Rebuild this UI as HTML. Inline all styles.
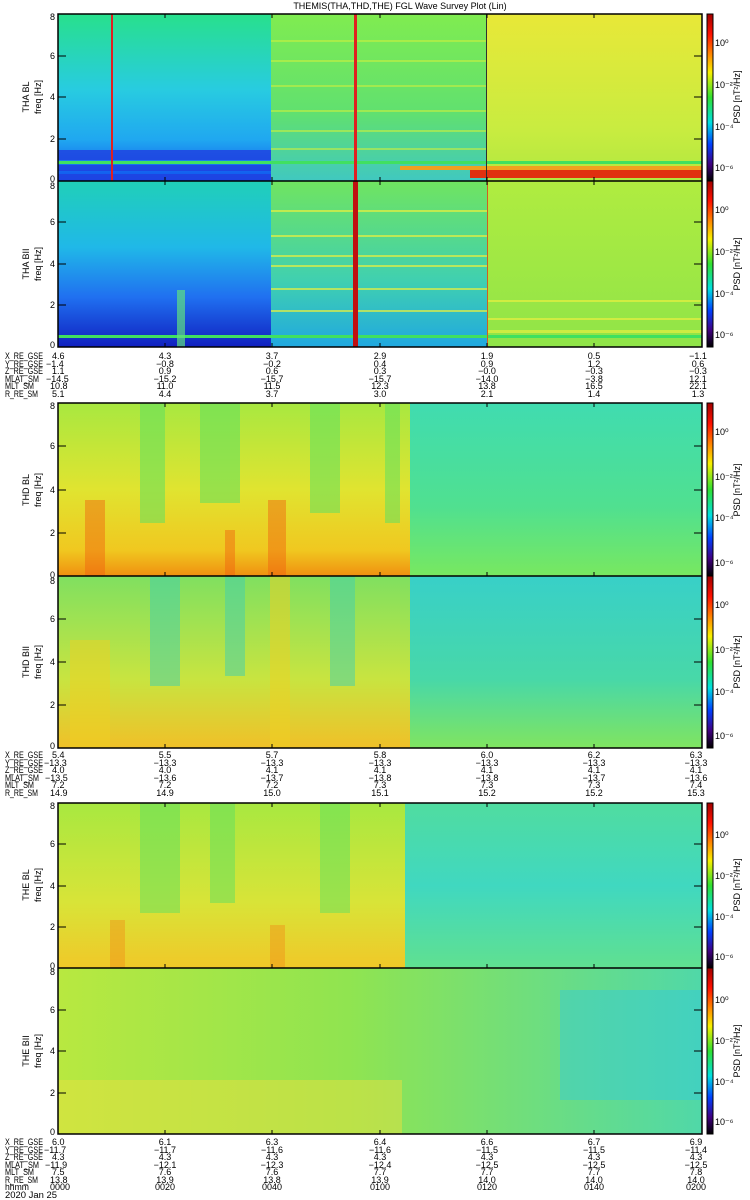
<!DOCTYPE html>
<html><head><meta charset="utf-8"><style>
html,body{margin:0;padding:0;background:#fff;}
svg{display:block}
text{font-family:"Liberation Sans",sans-serif;font-size:9px;fill:#000}
</style></head><body>
<svg width="750" height="1200" viewBox="0 0 750 1200" xmlns="http://www.w3.org/2000/svg">
<defs>
<linearGradient id="cb" x1="0" y1="0" x2="0" y2="1">
<stop offset="0" stop-color="#a00000"/><stop offset="0.12" stop-color="#ff1000"/>
<stop offset="0.25" stop-color="#ff9000"/><stop offset="0.35" stop-color="#f8f000"/>
<stop offset="0.5" stop-color="#30e030"/><stop offset="0.65" stop-color="#00e0e0"/>
<stop offset="0.78" stop-color="#0040ff"/><stop offset="0.9" stop-color="#400080"/>
<stop offset="1" stop-color="#000000"/></linearGradient>
<linearGradient id="a1l" x1="0" y1="0" x2="0" y2="1">
<stop offset="0" stop-color="#28e08c"/><stop offset="0.45" stop-color="#28cce0"/><stop offset="0.75" stop-color="#20a8f0"/><stop offset="1" stop-color="#1050f0"/></linearGradient>
<linearGradient id="a1m" x1="0" y1="0" x2="0" y2="1">
<stop offset="0" stop-color="#80ec50"/><stop offset="0.6" stop-color="#60e070"/><stop offset="1" stop-color="#40c8c0"/></linearGradient>
<linearGradient id="a1r" x1="0" y1="0" x2="0" y2="1">
<stop offset="0" stop-color="#e8e838"/><stop offset="0.7" stop-color="#c8ec40"/><stop offset="1" stop-color="#b0e840"/></linearGradient>
<linearGradient id="a2l" x1="0" y1="0" x2="0" y2="1">
<stop offset="0" stop-color="#20d0b8"/><stop offset="0.4" stop-color="#20b8e8"/><stop offset="0.7" stop-color="#2070f0"/><stop offset="1" stop-color="#1020c0"/></linearGradient>
<linearGradient id="a2m" x1="0" y1="0" x2="0" y2="1">
<stop offset="0" stop-color="#70e460"/><stop offset="0.6" stop-color="#40d0b0"/><stop offset="1" stop-color="#20a8e0"/></linearGradient>
<linearGradient id="a2r" x1="0" y1="0" x2="0" y2="1">
<stop offset="0" stop-color="#b0ec40"/><stop offset="1" stop-color="#90e448"/></linearGradient>
<linearGradient id="dl" x1="0" y1="0" x2="0" y2="1">
<stop offset="0" stop-color="#a8e840"/><stop offset="0.5" stop-color="#e0e430"/><stop offset="0.85" stop-color="#f0c820"/><stop offset="1" stop-color="#f09010"/></linearGradient>
<linearGradient id="dr" x1="0" y1="0" x2="0" y2="1">
<stop offset="0" stop-color="#40dcb0"/><stop offset="0.6" stop-color="#50e090"/><stop offset="1" stop-color="#78e860"/></linearGradient>
<linearGradient id="d2l" x1="0" y1="0" x2="0" y2="1">
<stop offset="0" stop-color="#80e060"/><stop offset="0.6" stop-color="#c8e440"/><stop offset="1" stop-color="#f0c028"/></linearGradient>
<linearGradient id="d2r" x1="0" y1="0" x2="0" y2="1">
<stop offset="0" stop-color="#38d0c8"/><stop offset="0.6" stop-color="#48d8a8"/><stop offset="1" stop-color="#80e460"/></linearGradient>
<linearGradient id="el" x1="0" y1="0" x2="0" y2="1">
<stop offset="0" stop-color="#a8e840"/><stop offset="0.6" stop-color="#d8e438"/><stop offset="1" stop-color="#f0c828"/></linearGradient>
<linearGradient id="er" x1="0" y1="0" x2="0" y2="1">
<stop offset="0" stop-color="#50dca0"/><stop offset="0.5" stop-color="#40d8c0"/><stop offset="1" stop-color="#60e090"/></linearGradient>
<linearGradient id="e2" x1="0" y1="0" x2="1" y2="0">
<stop offset="0" stop-color="#b8e840"/><stop offset="0.45" stop-color="#90e450"/><stop offset="1" stop-color="#50d8a8"/></linearGradient>
</defs>

<text x="400" y="9" text-anchor="middle" font-size="10">THEMIS(THA,THD,THE) FGL Wave Survey Plot (Lin)</text>

<!-- Panel 1 -->
<rect x="58" y="14" width="213" height="167" fill="url(#a1l)"/>
<rect x="271" y="14" width="216" height="167" fill="url(#a1m)"/>
<rect x="487" y="14" width="215" height="167" fill="url(#a1r)"/>
<g fill="#2040e0" opacity="0.8"><rect x="58" y="150" width="213" height="10"/><rect x="58" y="165" width="213" height="6"/><rect x="58" y="174" width="213" height="6"/></g>
<rect x="58" y="161" width="644" height="3" fill="#40e060"/>
<g fill="#c8f040" opacity="0.6"><rect x="271" y="40" width="216" height="2"/><rect x="271" y="60" width="216" height="2"/><rect x="271" y="85" width="216" height="2"/><rect x="271" y="110" width="216" height="2"/><rect x="271" y="130" width="216" height="2"/><rect x="271" y="148" width="216" height="2"/></g>
<rect x="400" y="166" width="302" height="4" fill="#f0a020"/>
<rect x="470" y="170" width="232" height="8" fill="#e03010"/>
<rect x="111" y="14" width="2" height="333" fill="#e02020"/>
<rect x="354" y="14" width="3" height="167" fill="#e02020"/>
<rect x="486" y="14" width="1" height="167" fill="#303030"/>

<!-- Panel 2 -->
<rect x="58" y="181" width="213" height="166" fill="url(#a2l)"/>
<rect x="271" y="181" width="216" height="166" fill="url(#a2m)"/>
<rect x="487" y="181" width="215" height="166" fill="url(#a2r)"/>
<g fill="#e8f040" opacity="0.7"><rect x="271" y="210" width="216" height="2"/><rect x="271" y="235" width="216" height="2"/><rect x="271" y="255" width="216" height="2"/><rect x="271" y="265" width="216" height="2"/><rect x="271" y="288" width="216" height="2"/><rect x="271" y="310" width="216" height="2"/><rect x="487" y="300" width="215" height="2"/><rect x="487" y="318" width="215" height="2"/><rect x="487" y="330" width="215" height="3"/></g>
<rect x="58" y="335" width="644" height="3" fill="#40e060"/>
<rect x="177" y="290" width="8" height="57" fill="#60e080" opacity="0.7"/>
<rect x="353" y="181" width="5" height="166" fill="#c01010"/>
<rect x="487" y="181" width="1" height="166" fill="#d06020"/>

<!-- Panel 3 -->
<rect x="58" y="403" width="352" height="173" fill="url(#dl)"/>
<rect x="410" y="403" width="292" height="173" fill="url(#dr)"/>
<g fill="#60e060" opacity="0.55"><rect x="140" y="403" width="25" height="120"/><rect x="200" y="403" width="40" height="100"/><rect x="310" y="403" width="30" height="110"/><rect x="385" y="403" width="15" height="120"/></g>
<g fill="#f06010" opacity="0.45"><rect x="85" y="500" width="20" height="76"/><rect x="268" y="500" width="18" height="76"/><rect x="225" y="530" width="10" height="46"/></g>

<!-- Panel 4 -->
<rect x="58" y="576" width="352" height="172" fill="url(#d2l)"/>
<rect x="410" y="576" width="292" height="172" fill="url(#d2r)"/>
<g fill="#40d0b0" opacity="0.5"><rect x="150" y="576" width="30" height="110"/><rect x="225" y="576" width="20" height="100"/><rect x="330" y="576" width="25" height="110"/></g>
<g fill="#f0d020" opacity="0.5"><rect x="270" y="576" width="20" height="172"/><rect x="70" y="640" width="40" height="108"/></g>

<!-- Panel 5 -->
<rect x="58" y="803" width="347" height="165" fill="url(#el)"/>
<rect x="405" y="803" width="297" height="165" fill="url(#er)"/>
<g fill="#60e060" opacity="0.5"><rect x="140" y="803" width="40" height="110"/><rect x="210" y="803" width="25" height="100"/><rect x="320" y="803" width="30" height="110"/></g>
<g fill="#f09018" opacity="0.45"><rect x="110" y="920" width="15" height="48"/><rect x="270" y="925" width="15" height="43"/></g>

<!-- Panel 6 -->
<rect x="58" y="968" width="644" height="166" fill="url(#e2)"/>
<rect x="58" y="1080" width="344" height="54" fill="#e8e040" opacity="0.5"/>
<rect x="560" y="990" width="142" height="110" fill="#30c8e0" opacity="0.4"/>

<g fill="none" stroke="#000" stroke-width="1.5">
<rect x="58" y="14" width="644" height="333"/><line x1="58" y1="181" x2="702" y2="181"/>
<rect x="58" y="403" width="644" height="345"/><line x1="58" y1="576" x2="702" y2="576"/>
<rect x="58" y="803" width="644" height="331"/><line x1="58" y1="968" x2="702" y2="968"/>
</g>
<g stroke="#000" stroke-width="1">
<path d="M165 14v4M272 14v4M380 14v4M487 14v4M594 14v4M165 347v-4M272 347v-4M380 347v-4M487 347v-4M594 347v-4M165 181v-4M272 181v-4M380 181v-4M487 181v-4M594 181v-4M165 181v4M272 181v4M380 181v4M487 181v4M594 181v4"/>
<path d="M165 403v4M272 403v4M380 403v4M487 403v4M594 403v4M165 748v-4M272 748v-4M380 748v-4M487 748v-4M594 748v-4M165 576v-4M272 576v-4M380 576v-4M487 576v-4M594 576v-4"/>
<path d="M165 803v4M272 803v4M380 803v4M487 803v4M594 803v4M165 1134v-4M272 1134v-4M380 1134v-4M487 1134v-4M594 1134v-4M165 968v-4M272 968v-4M380 968v-4M487 968v-4M594 968v-4"/>
<path d="M58 56h8M58 97h8M58 139h8M702 56h-8M702 97h-8M702 139h-8M58 222h8M58 264h8M58 305h8M702 222h-8M702 264h-8M702 305h-8"/>
<path d="M58 446h8M58 490h8M58 533h8M702 446h-8M702 490h-8M702 533h-8M58 619h8M58 662h8M58 705h8M702 619h-8M702 662h-8M702 705h-8"/>
<path d="M58 844h8M58 886h8M58 927h8M702 844h-8M702 886h-8M702 927h-8M58 1010h8M58 1051h8M58 1093h8M702 1010h-8M702 1051h-8M702 1093h-8"/>
</g>

<g stroke="#000" stroke-width="1">
<rect x="707" y="14" width="6" height="167" fill="url(#cb)"/><rect x="707" y="181" width="6" height="166" fill="url(#cb)"/>
<rect x="707" y="403" width="6" height="173" fill="url(#cb)"/><rect x="707" y="576" width="6" height="172" fill="url(#cb)"/>
<rect x="707" y="803" width="6" height="165" fill="url(#cb)"/><rect x="707" y="968" width="6" height="166" fill="url(#cb)"/>
</g>

<g font-size="8" text-anchor="end">
<text x="55" y="20">8</text><text x="55" y="59">6</text><text x="55" y="100">4</text><text x="55" y="142">2</text><text x="55" y="182">0</text>
<text x="55" y="189">8</text><text x="55" y="225">6</text><text x="55" y="267">4</text><text x="55" y="308">2</text><text x="55" y="348">0</text>
<text x="55" y="409">8</text><text x="55" y="449">6</text><text x="55" y="493">4</text><text x="55" y="536">2</text><text x="55" y="578">0</text>
<text x="55" y="584">8</text><text x="55" y="622">6</text><text x="55" y="665">4</text><text x="55" y="708">2</text><text x="55" y="749">0</text>
<text x="55" y="809">8</text><text x="55" y="847">6</text><text x="55" y="889">4</text><text x="55" y="930">2</text><text x="55" y="969">0</text>
<text x="55" y="975">8</text><text x="55" y="1013">6</text><text x="55" y="1054">4</text><text x="55" y="1096">2</text><text x="55" y="1135">0</text>
</g>
<g font-size="8">
<text x="715" y="46">10⁰</text><text x="715" y="88">10⁻²</text><text x="715" y="130">10⁻⁴</text><text x="715" y="171">10⁻⁶</text>
<text x="715" y="213">10⁰</text><text x="715" y="255">10⁻²</text><text x="715" y="297">10⁻⁴</text><text x="715" y="338">10⁻⁶</text>
<text x="715" y="435">10⁰</text><text x="715" y="480">10⁻²</text><text x="715" y="521">10⁻⁴</text><text x="715" y="566">10⁻⁶</text>
<text x="715" y="608">10⁰</text><text x="715" y="653">10⁻²</text><text x="715" y="695">10⁻⁴</text><text x="715" y="739">10⁻⁶</text>
<text x="715" y="838">10⁰</text><text x="715" y="879">10⁻²</text><text x="715" y="920">10⁻⁴</text><text x="715" y="960">10⁻⁶</text>
<text x="715" y="1003">10⁰</text><text x="715" y="1044">10⁻²</text><text x="715" y="1085">10⁻⁴</text><text x="715" y="1125">10⁻⁶</text>
</g>
<g font-size="8">
<text transform="translate(740,97) rotate(-90)" text-anchor="middle">PSD [nT²/Hz]</text>
<text transform="translate(740,264) rotate(-90)" text-anchor="middle">PSD [nT²/Hz]</text>
<text transform="translate(740,490) rotate(-90)" text-anchor="middle">PSD [nT²/Hz]</text>
<text transform="translate(740,662) rotate(-90)" text-anchor="middle">PSD [nT²/Hz]</text>
<text transform="translate(740,885) rotate(-90)" text-anchor="middle">PSD [nT²/Hz]</text>
<text transform="translate(740,1051) rotate(-90)" text-anchor="middle">PSD [nT²/Hz]</text>
<text transform="translate(29,97) rotate(-90)" text-anchor="middle">THA BL</text>
<text transform="translate(41,97) rotate(-90)" text-anchor="middle">freq [Hz]</text>
<text transform="translate(29,264) rotate(-90)" text-anchor="middle">THA BII</text>
<text transform="translate(41,264) rotate(-90)" text-anchor="middle">freq [Hz]</text>
<text transform="translate(29,490) rotate(-90)" text-anchor="middle">THD BL</text>
<text transform="translate(41,490) rotate(-90)" text-anchor="middle">freq [Hz]</text>
<text transform="translate(29,662) rotate(-90)" text-anchor="middle">THD BII</text>
<text transform="translate(41,662) rotate(-90)" text-anchor="middle">freq [Hz]</text>
<text transform="translate(29,885) rotate(-90)" text-anchor="middle">THE BL</text>
<text transform="translate(41,885) rotate(-90)" text-anchor="middle">freq [Hz]</text>
<text transform="translate(29,1051) rotate(-90)" text-anchor="middle">THE BII</text>
<text transform="translate(41,1051) rotate(-90)" text-anchor="middle">freq [Hz]</text>
</g>

<!-- ephemeris block 1 -->
<g font-size="8.5">
<text x="5" y="359" textLength="38" lengthAdjust="spacingAndGlyphs">X_RE_GSE</text><text x="5" y="367" textLength="38" lengthAdjust="spacingAndGlyphs">Y_RE_GSE</text><text x="5" y="374" textLength="38" lengthAdjust="spacingAndGlyphs">Z_RE_GSE</text><text x="5" y="382" textLength="34" lengthAdjust="spacingAndGlyphs">MLAT_SM</text><text x="5" y="389" textLength="29" lengthAdjust="spacingAndGlyphs">MLT_SM</text><text x="5" y="397" textLength="33" lengthAdjust="spacingAndGlyphs">R_RE_SM</text>
<text x="52" y="359">4.6</text><text x="46" y="367">−1.4</text><text x="52" y="374">1.1</text><text x="46" y="382">−14.5</text><text x="50" y="389">10.8</text><text x="52" y="397">5.1</text>
</g>
<g font-size="8.5" text-anchor="middle">
<text x="165" y="359">4.3</text><text x="165" y="367">−0.8</text><text x="165" y="374">0.9</text><text x="165" y="382">−15.2</text><text x="165" y="389">11.0</text><text x="165" y="397">4.4</text>
<text x="272" y="359">3.7</text><text x="272" y="367">−0.2</text><text x="272" y="374">0.6</text><text x="272" y="382">−15.7</text><text x="272" y="389">11.5</text><text x="272" y="397">3.7</text>
<text x="380" y="359">2.9</text><text x="380" y="367">0.4</text><text x="380" y="374">0.3</text><text x="380" y="382">−15.7</text><text x="380" y="389">12.3</text><text x="380" y="397">3.0</text>
<text x="487" y="359">1.9</text><text x="487" y="367">0.9</text><text x="487" y="374">−0.0</text><text x="487" y="382">−14.0</text><text x="487" y="389">13.8</text><text x="487" y="397">2.1</text>
<text x="594" y="359">0.5</text><text x="594" y="367">1.2</text><text x="594" y="374">−0.3</text><text x="594" y="382">−3.8</text><text x="594" y="389">16.5</text><text x="594" y="397">1.4</text>
<text x="698" y="359">−1.1</text><text x="698" y="367">0.6</text><text x="698" y="374">−0.3</text><text x="698" y="382">12.1</text><text x="698" y="389">22.1</text><text x="698" y="397">1.3</text>
</g>

<!-- ephemeris block 2 -->
<g font-size="8.5">
<text x="5" y="758" textLength="38" lengthAdjust="spacingAndGlyphs">X_RE_GSE</text><text x="5" y="766" textLength="38" lengthAdjust="spacingAndGlyphs">Y_RE_GSE</text><text x="5" y="773" textLength="38" lengthAdjust="spacingAndGlyphs">Z_RE_GSE</text><text x="5" y="781" textLength="34" lengthAdjust="spacingAndGlyphs">MLAT_SM</text><text x="5" y="788" textLength="29" lengthAdjust="spacingAndGlyphs">MLT_SM</text><text x="5" y="796" textLength="33" lengthAdjust="spacingAndGlyphs">R_RE_SM</text>
<text x="52" y="758">5.4</text><text x="44" y="766">−13.3</text><text x="52" y="773">4.0</text><text x="45" y="781">−13.5</text><text x="52" y="788">7.2</text><text x="50" y="796">14.9</text>
</g>
<g font-size="8.5" text-anchor="middle">
<text x="165" y="758">5.5</text><text x="165" y="766">−13.3</text><text x="165" y="773">4.0</text><text x="165" y="781">−13.6</text><text x="165" y="788">7.2</text><text x="165" y="796">14.9</text>
<text x="272" y="758">5.7</text><text x="272" y="766">−13.3</text><text x="272" y="773">4.1</text><text x="272" y="781">−13.7</text><text x="272" y="788">7.2</text><text x="272" y="796">15.0</text>
<text x="380" y="758">5.8</text><text x="380" y="766">−13.3</text><text x="380" y="773">4.1</text><text x="380" y="781">−13.8</text><text x="380" y="788">7.3</text><text x="380" y="796">15.1</text>
<text x="487" y="758">6.0</text><text x="487" y="766">−13.3</text><text x="487" y="773">4.1</text><text x="487" y="781">−13.8</text><text x="487" y="788">7.3</text><text x="487" y="796">15.2</text>
<text x="594" y="758">6.2</text><text x="594" y="766">−13.3</text><text x="594" y="773">4.1</text><text x="594" y="781">−13.7</text><text x="594" y="788">7.3</text><text x="594" y="796">15.2</text>
<text x="696" y="758">6.3</text><text x="696" y="766">−13.3</text><text x="696" y="773">4.1</text><text x="696" y="781">−13.6</text><text x="696" y="788">7.4</text><text x="696" y="796">15.3</text>
</g>

<!-- ephemeris block 3 -->
<g font-size="8.5">
<text x="5" y="1145" textLength="38" lengthAdjust="spacingAndGlyphs">X_RE_GSE</text><text x="5" y="1153" textLength="38" lengthAdjust="spacingAndGlyphs">Y_RE_GSE</text><text x="5" y="1160" textLength="38" lengthAdjust="spacingAndGlyphs">Z_RE_GSE</text><text x="5" y="1168" textLength="34" lengthAdjust="spacingAndGlyphs">MLAT_SM</text><text x="5" y="1175" textLength="29" lengthAdjust="spacingAndGlyphs">MLT_SM</text><text x="5" y="1183" textLength="33" lengthAdjust="spacingAndGlyphs">R_RE_SM</text><text x="5" y="1190" textLength="24" lengthAdjust="spacingAndGlyphs">hhmm</text><text x="5" y="1198" textLength="52" lengthAdjust="spacingAndGlyphs">2020 Jan 25</text>
<text x="52" y="1145">6.0</text><text x="44" y="1153">−11.7</text><text x="52" y="1160">4.3</text><text x="45" y="1168">−11.9</text><text x="52" y="1175">7.5</text><text x="50" y="1183">13.8</text><text x="50" y="1190">0000</text>
</g>
<g font-size="8.5" text-anchor="middle">
<text x="165" y="1145">6.1</text><text x="165" y="1153">−11.7</text><text x="165" y="1160">4.3</text><text x="165" y="1168">−12.1</text><text x="165" y="1175">7.6</text><text x="165" y="1183">13.9</text><text x="165" y="1190">0020</text>
<text x="272" y="1145">6.3</text><text x="272" y="1153">−11.6</text><text x="272" y="1160">4.3</text><text x="272" y="1168">−12.3</text><text x="272" y="1175">7.6</text><text x="272" y="1183">13.8</text><text x="272" y="1190">0040</text>
<text x="380" y="1145">6.4</text><text x="380" y="1153">−11.6</text><text x="380" y="1160">4.3</text><text x="380" y="1168">−12.4</text><text x="380" y="1175">7.7</text><text x="380" y="1183">13.9</text><text x="380" y="1190">0100</text>
<text x="487" y="1145">6.6</text><text x="487" y="1153">−11.5</text><text x="487" y="1160">4.3</text><text x="487" y="1168">−12.5</text><text x="487" y="1175">7.7</text><text x="487" y="1183">14.0</text><text x="487" y="1190">0120</text>
<text x="594" y="1145">6.7</text><text x="594" y="1153">−11.5</text><text x="594" y="1160">4.3</text><text x="594" y="1168">−12.5</text><text x="594" y="1175">7.7</text><text x="594" y="1183">14.0</text><text x="594" y="1190">0140</text>
<text x="696" y="1145">6.9</text><text x="696" y="1153">−11.4</text><text x="696" y="1160">4.3</text><text x="696" y="1168">−12.5</text><text x="696" y="1175">7.8</text><text x="696" y="1183">14.0</text><text x="696" y="1190">0200</text>
</g>
</svg>
</body></html>
